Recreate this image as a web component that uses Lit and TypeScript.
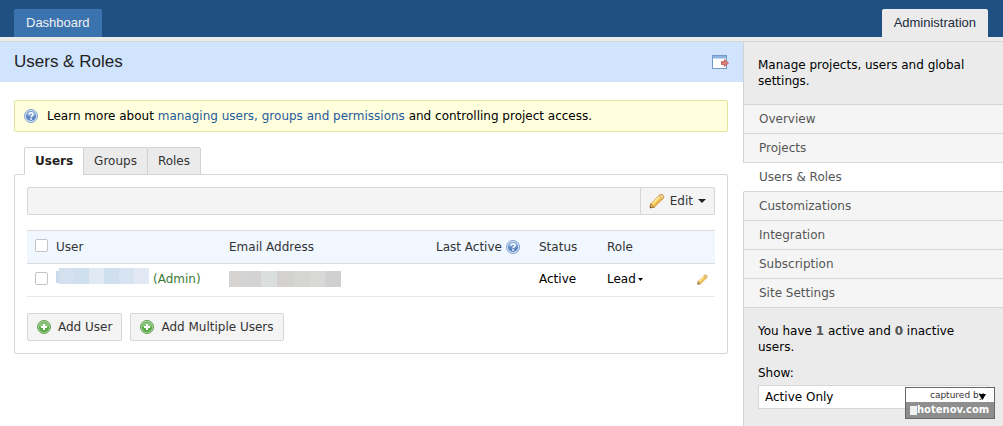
import { LitElement, html, css, svg } from "lit";
import { customElement } from "lit/decorators.js";

const helpIcon = html`<svg class="icon" width="14" height="14" viewBox="0 0 14 14" aria-hidden="true">
  <circle cx="7" cy="7" r="6.5" fill="#dce7f5" stroke="#7f9fcd" />
  <circle cx="7" cy="7" r="5.1" fill="#5c87c2" />
  <path d="M2.3 6.2a4.8 4.8 0 0 1 9.4 0Q7 8 2.3 6.2z" fill="#86a8d8" />
  <path d="M5 5.6C5 3.2 9.1 3.2 9.1 5.5c0 1.4-2 1.4-2 2.8" fill="none" stroke="#fff" stroke-width="1.6" />
  <rect x="6.2" y="9.2" width="1.7" height="1.6" fill="#fff" />
</svg>`;

const addIcon = html`<svg class="icon" width="14" height="14" viewBox="0 0 14 14" aria-hidden="true">
  <circle cx="7" cy="7" r="6.5" fill="#b9dcae" stroke="#5d9c4d" />
  <circle cx="7" cy="7" r="5.3" fill="#5aa848" />
  <path d="M1.9 6.6a5.2 5.2 0 0 1 10.2 0Q7 8.4 1.9 6.6z" fill="#8cc87b" />
  <path d="M7 4v6M4 7h6" stroke="#fff" stroke-width="2" />
</svg>`;

const pencil = (size: number) => html`<svg class="icon" width=${size} height=${size} viewBox="0 0 16 16" aria-hidden="true">
  <path d="M1.200 14.800l.4-3.800L10.600 2q1.400-1.200 2.800-.2l.9.900q1 1.400-.2 2.800L5.200 14.200z" fill="#f6cf5c" stroke="#cf9440" stroke-width=".9" />
  <path d="M3.400 10.800L11 3.200" stroke="#fdeba6" stroke-width="1.500" />
  <path d="M5 12.800L12.800 5" stroke="#e2a93f" stroke-width="1" />
  <path d="M10.600 2q1.400-1.200 2.800-.2l.9.900q1 1.400-.2 2.800l-.8.700-3.400-3.400z" fill="#f3d3a4" stroke="#cf9440" stroke-width=".8" />
  <path d="M1.200 14.800l.4-3.800 3.600 3.200z" fill="#e8c88e" stroke="#a06c30" stroke-width=".8" />
  <path d="M1 15l.4-1.800 1.500 1.400z" fill="#5b4430" />
</svg>`;

const windowIcon = html`<svg class="icon" width="17" height="14" viewBox="0 0 17 14" aria-hidden="true">
  <rect x=".5" y=".5" width="14" height="13" fill="#fff" stroke="#7299ca" />
  <rect x="1" y="1" width="13" height="3" fill="#8fb3df" />
  <rect x="1" y="3" width="13" height="1" fill="#c6daf1" />
  <path d="M9.500 6.500h3v-2l4 3.500-4 3.500v-2h-3z" fill="#dc8078" stroke="#b9544f" stroke-width=".8" />
</svg>`;

const mosaic = (colors: string[], cell: number, lead = "") => html`<svg
  class="mosaic" width=${colors.length * cell + (lead ? 3 : 0)} height=${lead ? 22 : 16} aria-hidden="true">
  ${lead ? svg`<rect x="0" y="3" width="8" height="12" fill=${lead} />` : ""}
  ${colors.map((c, i) => svg`<rect x=${i * cell + (lead ? 3 : 0)} width=${cell} height="16" fill=${c} />`)}
</svg>`;

const sections = ["Overview", "Projects", "Users & Roles", "Customizations", "Integration", "Subscription", "Site Settings"];

@customElement("app-root")
export class AppRoot extends LitElement {
  static styles = css`
    :host {
      display: flex;
      flex-direction: column;
      min-height: 100vh;
      background: #fff;
      color: #000;
      font: 12px/16px "DejaVu Sans", Verdana, sans-serif;
    }
    * { box-sizing: border-box; }
    a { text-decoration: none; color: inherit; }
    button, select { font: inherit; color: inherit; margin: 0; }
    .icon { display: block; flex: none; }
    .top {
      display: flex;
      justify-content: space-between;
      padding: 9px 15px 0 14px;
      background: #205081;
      font: 13px/28px "Liberation Sans", Arial, sans-serif;
    }
    .top-tab {
      height: 28px;
      padding: 0 12px;
      border-radius: 2px 2px 0 0;
      background: #3b73af;
      color: #f0f0f0;
    }
    .top-tab.current { background: #ebebeb; color: #222c3c; }
    .strip { height: 5px; background: #ebebeb; border-bottom: 1px solid #d6d6d6; }
    .body { flex: 1; display: grid; grid-template-columns: minmax(0, 1fr) 260px; }
    .title {
      display: flex;
      align-items: center;
      justify-content: space-between;
      height: 40px;
      padding: 0 14px;
      background: #d0e4fe;
    }
    h1 { margin: 0; font: 17px/20px "Liberation Sans", Arial, sans-serif; color: #222; }
    .content { padding: 18px 15px 20px 14px; }
    .note {
      display: flex;
      align-items: center;
      gap: 9px;
      height: 32px;
      padding: 0 9px;
      border: 1px solid #e3e3a0;
      border-radius: 2px;
      background: #ffffdd;
    }
    .note a { color: #1f5a9c; }
    .tabs { display: flex; margin: 15px 0 -1px 10px; position: relative; }
    .tab {
      height: 28px;
      padding: 0 10px;
      border: 1px solid #d2d2d2;
      border-radius: 2px 2px 0 0;
      background: #ebebeb;
      color: #333;
    }
    .tab + .tab { margin-left: -1px; }
    .tab.on { background: #fff; border-bottom-color: #fff; font-weight: bold; color: #222; }
    .panel { padding: 12px; border: 1px solid #d6d6d6; border-radius: 2px; }
    .bar {
      display: flex;
      justify-content: flex-end;
      height: 28px;
      border: 1px solid #d6d6d6;
      border-radius: 2px;
      background: #f4f4f4;
      color: #333;
    }
    .edit {
      display: flex;
      align-items: center;
      gap: 5px;
      padding: 0 8px;
      border: 0;
      border-left: 1px solid #d6d6d6;
      background: none;
    }
    table { width: 100%; margin: 15px 0 16px; border-collapse: collapse; table-layout: fixed; }
    th, td { height: 33px; padding: 0; text-align: left; font-weight: normal; white-space: nowrap; }
    th { background: #f0f7ff; color: #333; border-top: 1px solid #dcdcdc; border-bottom: 1px solid #dcdcdc; }
    td { padding-bottom: 2px; border-bottom: 1px solid #e8e8e8; }
    .c-check { width: 29px; padding: 0 0 0 8px; }
    .c-user { width: 173px; }
    .c-last { width: 103px; }
    .c-status { width: 68px; }
    .c-role { width: 90px; }
    .c-edit { width: 18px; }
    .tick {
      display: block;
      appearance: none;
      width: 13px;
      height: 13px;
      margin: 0 0 4px;
      border: 1px solid #c4c4c4;
      border-radius: 2px;
      background: #fff;
    }
    .tick:checked { background: #3b73af; }
    .line { display: flex; align-items: center; gap: 4px; }
    .user { color: #3c7a34; }
    .mosaic { display: block; flex: none; }
    .plain { display: flex; align-items: center; gap: 2px; padding: 0; border: 0; background: none; }
    .actions { display: flex; gap: 8px; }
    .btn {
      display: flex;
      align-items: center;
      gap: 7px;
      height: 28px;
      padding: 0 9px;
      border: 1px solid #d6d6d6;
      border-radius: 2px;
      background: #f4f4f4;
      color: #333;
    }
    .side { border-left: 1px solid #d2d2d2; background: #ebebeb; }
    .side p { margin: 0; padding: 0 14px; }
    .side .intro { padding: 15px 14px; }
    .menu { margin: 0 0 15px -1px; padding: 0; list-style: none; border-top: 1px solid #d6d6d6; }
    .menu a {
      display: block;
      height: 29px;
      padding-left: 15px;
      border-left: 1px solid #d2d2d2;
      border-bottom: 1px solid #d6d6d6;
      background: #f5f5f5;
      color: #555;
      line-height: 28px;
    }
    .menu a.on { background: #fff; border-left-color: #fff; }
    .side b { color: #555; }
    .filter { position: relative; display: flex; flex-direction: column; gap: 4px; padding: 10px 15px 0 14px; }
    .filter select {
      appearance: none;
      width: 100%;
      height: 24px;
      padding: 0 6px;
      border: 1px solid #d6d6d6;
      border-radius: 0;
      background: #fff;
    }
    .stamp {
      position: absolute;
      right: 8px;
      bottom: -10px;
      width: 90px;
      border: 1px solid #666;
      color: #333;
      pointer-events: none;
    }
    .stamp-top {
      display: flex;
      justify-content: flex-end;
      height: 14px;
      padding-right: 8px;
      background: rgba(255, 255, 255, 0.85);
      font: 9px/14px "DejaVu Sans", sans-serif;
    }
    .stamp-top svg { flex: none; margin: 6px 0 0 -5px; }
    .stamp-low {
      display: flex;
      align-items: center;
      height: 16px;
      padding-left: 4px;
      background: rgba(128, 128, 128, 0.88);
      color: #fff;
      font: bold 10px/16px "DejaVu Sans", sans-serif;
    }
    .stamp-block { width: 7px; height: 9px; background: #f0f0f0; }
  `;

  render() {
    return html`
      <nav class="top">
        <a class="top-tab" href="#">Dashboard</a>
        <a class="top-tab current" href="#">Administration</a>
      </nav>
      <div class="strip"></div>
      <div class="body">
        <main>
          <header class="title"><h1>Users &amp; Roles</h1>${windowIcon}</header>
          <div class="content">
            <div class="note">${helpIcon}<span>Learn more about <a href="#">managing users, groups and permissions</a> and controlling project access.</span></div>
            <div class="tabs" role="tablist">
              <button class="tab on" role="tab" aria-selected="true">Users</button>
              <button class="tab" role="tab" aria-selected="false">Groups</button>
              <button class="tab" role="tab" aria-selected="false">Roles</button>
            </div>
            <section class="panel">
              <div class="bar">
                <button class="edit">${pencil(16)}<span>Edit</span>
                  <svg class="icon" width="8" height="4" aria-hidden="true"><path d="M0 0h8L4 4z" fill="#222" /></svg>
                </button>
              </div>
              <table>
                <thead>
                  <tr>
                    <th class="c-check"><input class="tick" type="checkbox" aria-label="Select all users" /></th>
                    <th class="c-user">User</th>
                    <th>Email Address</th>
                    <th class="c-last"><span class="line">Last Active ${helpIcon}</span></th>
                    <th class="c-status">Status</th>
                    <th class="c-role">Role</th>
                    <th class="c-edit"></th>
                  </tr>
                </thead>
                <tbody>
                  <tr>
                    <td class="c-check"><input class="tick" type="checkbox" aria-label="Select user" /></td>
                    <td><a class="line user" href="#">${mosaic(["#d3e1ee", "#cfdfec", "#e1e9f4", "#cfdfec", "#d6e3f0", "#e1e8f3"], 15, "#c9dbea")}(Admin)</a></td>
                    <td>${mosaic(["#d6d4d2", "#d3d3d3", "#dadfdd", "#d4d2d0", "#d5d5d3", "#d8d8d6", "#d0d0d0"], 16)}</td>
                    <td></td>
                    <td>Active</td>
                    <td><button class="plain">Lead<svg class="icon" width="5" height="3" aria-hidden="true"><path d="M0 0h5L2.500 3z" fill="#000" /></svg></button></td>
                    <td><button class="plain" aria-label="Edit user">${pencil(11)}</button></td>
                  </tr>
                </tbody>
              </table>
              <div class="actions">
                <button class="btn">${addIcon}Add User</button>
                <button class="btn">${addIcon}Add Multiple Users</button>
              </div>
            </section>
          </div>
        </main>
        <aside class="side">
          <p class="intro">Manage projects, users and global settings.</p>
          <ul class="menu">
            ${sections.map((s) => html`<li><a class=${s === "Users & Roles" ? "on" : ""} href="#">${s}</a></li>`)}
          </ul>
          <p>You have <b>1</b> active and <b>0</b> inactive users.</p>
          <div class="filter">
            <label for="show">Show:</label>
            <select id="show"><option>Active Only</option><option>Inactive Only</option></select>
            <div class="stamp">
              <div class="stamp-top">captured by<svg width="7" height="6" aria-hidden="true"><path d="M0 0h7L3.500 6z" fill="#000" /></svg></div>
              <div class="stamp-low"><span class="stamp-block"></span>hotenov.com</div>
            </div>
          </div>
        </aside>
      </div>
    `;
  }
}
